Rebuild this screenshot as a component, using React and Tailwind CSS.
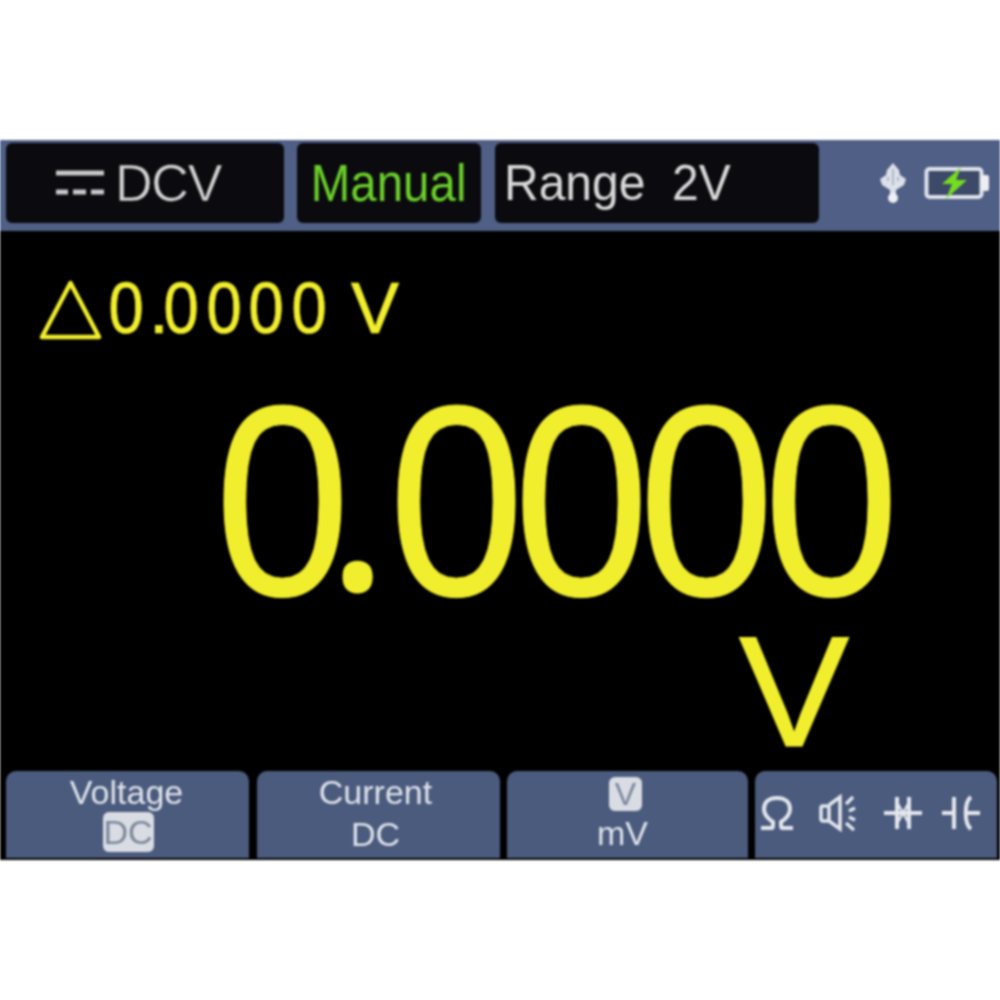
const SANS = "font-['Liberation_Sans',Arial,sans-serif]";

function Glyphs({ text, cell, dotCell, scale, dotClass }) {
  return (
    <div className="flex items-baseline">
      {text.split("").map((c, i) =>
        c === "." ? (
          <span key={i} className={`flex justify-center ${dotCell} ${dotClass}`}>.</span>
        ) : (
          <span key={i} className={`flex justify-center ${cell} ${scale}`}>{c}</span>
        )
      )}
    </div>
  );
}

function Menu({ w, children }) {
  return (
    <div className={`${w} h-[87px] rounded-t-[10px] bg-[#4b5b7e] flex flex-col items-center text-[#dfe3ea] text-[34px] leading-[42px]`}>
      {children}
    </div>
  );
}

export default function App() {
  return (
    <div className={`w-[1000px] h-[1000px] bg-white flex flex-col pt-[140px] blur-[1px] ${SANS}`}>
      <div className="h-[720px] flex flex-col">
        <div className="h-[91px] bg-[#4f5f85] flex pl-[6px] pt-[3px]">
          <div className="w-[278px] h-[80px] rounded-md bg-[#0b0b0f] flex items-center pl-[49px] text-[#d2d2d2]">
            <svg width="50" height="28" viewBox="0 0 50 28" fill="none" stroke="#c9c9c9" strokeWidth="5">
              <path d="M1 4h48" />
              <path d="M1 23h12M18 23h13M36 23h13" />
            </svg>
            <span className="ml-[10px] text-[52px] leading-none tracking-[-1.2px] [-webkit-text-stroke:0.6px_#0b0b0f]">DCV</span>
          </div>
          <div className="ml-[13px] w-[184px] h-[80px] rounded-md bg-[#0b0b0f] flex items-center justify-center text-[#6bd02a] text-[51px] leading-none">
            <span className="scale-x-[0.93] ml-[-1px]">Manual</span>
          </div>
          <div className="ml-[14px] w-[324px] h-[80px] rounded-md bg-[#0b0b0f] flex items-center pl-[9px] text-[#d8d8d8] text-[50px] leading-none whitespace-pre">
            <span className="scale-x-[0.96] origin-left">Range  2V</span>
          </div>
          <div className="flex items-center h-[80px] ml-[60px]">
            <svg width="28" height="40" viewBox="0 0 28 40" fill="none">
              <path d="M14 0l6 7 1 5 6 4-2 6-8 5v5h-6v-5l-8-5-2-6 6-4 1-5z" fill="#dde1ea" />
              <circle cx="14" cy="35" r="5" fill="#eef0f4" />
              <path d="M14 6v16M9 14v4M19 14v4" stroke="#aeb6c8" strokeWidth="2" />
            </svg>
            <svg width="66" height="36" viewBox="0 0 66 36" fill="none" className="ml-[17px]">
              <rect x="2.500" y="4" width="55" height="28" rx="3" fill="#3c4968" stroke="#dfe3ea" strokeWidth="4" />
              <rect x="57" y="10" width="8" height="16" rx="2" fill="#eceef2" />
              <path d="M37 2L18 19h10l-6 15 21-19H32z" fill="#76dc22" />
            </svg>
          </div>
        </div>

        <div className="flex-1 bg-black text-[#f1ee2e] flex flex-col">
          <div className="flex items-center pl-[39px] pt-[44px] text-[72px] leading-[64px] [-webkit-text-stroke:0.7px_#f1ee2e]">
            <svg width="64" height="62" viewBox="0 0 64 62" fill="none" className="mt-[4px]">
              <path d="M31.500 4L3 58h57z" stroke="#f1ee2e" strokeWidth="4.500" strokeLinejoin="round" />
            </svg>
            <div className="ml-[2px] flex items-baseline">
              <Glyphs text="0.0000" cell="w-[42.500px]" dotCell="w-[12.500px]" scale="scale-x-[0.88]" dotClass="translate-x-[5px]" />
              <span className="ml-[21px]">V</span>
            </div>
          </div>

          <div className="flex justify-end pr-[106px] mt-[23px] text-[272px] leading-[268px] [-webkit-text-stroke:1px_#f1ee2e]">
            <Glyphs text="0.0000" cell="w-[125px]" dotCell="w-[49px]" scale="scale-x-[0.9]" dotClass="font-['Open_Sans',sans-serif] text-[250px] leading-[268px] translate-x-[-12px] translate-y-[-5px]" />
          </div>

          <div className="flex justify-end pr-[151px] text-[158px] leading-[124px] mt-[-6px] [-webkit-text-stroke:1px_#f1ee2e]">
            <span className="scale-x-[1.05] origin-right">V</span>
          </div>
        </div>

        <div className="h-[90px] bg-black pt-px flex pl-[6px] gap-[8px]">
          <Menu w="w-[243px]">
            <span className="mr-[2px]">Voltage</span>
            <span className="w-[51px] h-[40px] -mt-[1px] mr-[-1px] rounded-md bg-[#d9dce3] text-[#7d879c] flex items-center justify-center">DC</span>
          </Menu>
          <Menu w="w-[243px]">
            <span className="mr-[6px]">Current</span>
            <span className="mr-[6px]">DC</span>
          </Menu>
          <div className="-ml-[1px]">
            <Menu w="w-[241px]">
              <span className="mt-[6px] mr-[4px] w-[33px] h-[34px] rounded-md bg-[#d9dce3] text-[#7d879c] text-[32px] leading-[34px] flex items-center justify-center">V</span>
              <span className="mt-[1px] mr-[10px]">mV</span>
            </Menu>
          </div>
          <div className="w-[242px] h-[87px] -ml-[1px] rounded-t-[10px] bg-[#4b5b7e] flex items-center pl-[5px] pb-[3px]">
            <svg width="34" height="34" viewBox="0 0 34 34" fill="none" stroke="#e3e6ec" strokeWidth="4">
              <path d="M1 32h11c1 0 1-1 1-3v-3C7 22 4 18 4 13 4 6 9 2 17 2s13 4 13 11c0 5-3 9-9 13v3c0 2 0 3 1 3h11" />
            </svg>
            <svg width="42" height="38" viewBox="0 0 42 38" fill="none" stroke="#e3e6ec" strokeWidth="3.500" className="ml-[25px]">
              <rect x="2" y="12" width="8" height="15" rx="2" />
              <path d="M10 11L21 3v32L10 27" />
              <path d="M27 10l7-7M30 17l6-3M30 23l6 3M27 29l8 7" />
            </svg>
            <svg width="40" height="36" viewBox="0 0 40 36" fill="none" stroke="#e3e6ec" strokeWidth="4" className="ml-[22px]">
              <path d="M1 18h38M14 2v32M26 2v32" />
              <path d="M15 9l10 18M25 9L15 27" strokeWidth="2.500" />
            </svg>
            <svg width="40" height="36" viewBox="0 0 40 36" fill="none" stroke="#e3e6ec" strokeWidth="4" className="ml-[18px]">
              <path d="M1 18h12M13 2v32M39 18H24M30 2c-7 5-7 27 0 32" />
            </svg>
          </div>
        </div>
      </div>
    </div>
  );
}
